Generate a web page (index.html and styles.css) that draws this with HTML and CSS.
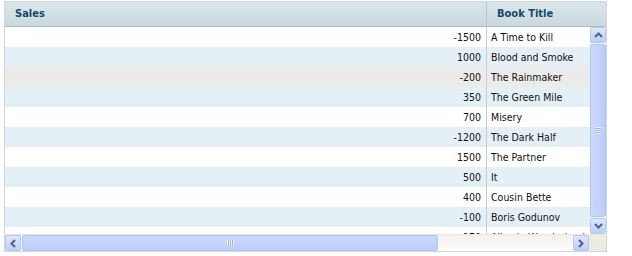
FILE: index.html
```html
<!DOCTYPE html>
<html>
<head>
<meta charset="utf-8">
<link rel="stylesheet" href="styles.css">
</head>
<body>
<div class="grid">
  <div class="head">
    <div class="hcell sales">Sales</div>
    <div class="hcell title">Book Title</div>
  </div>
  <div class="main">
    <div class="rows">
      <div class="row"><div class="c num">-1500</div><div class="c txt">A Time to Kill</div></div>
      <div class="row alt"><div class="c num">1000</div><div class="c txt">Blood and Smoke</div></div>
      <div class="row hover"><div class="c num">-200</div><div class="c txt">The Rainmaker</div></div>
      <div class="row alt"><div class="c num">350</div><div class="c txt">The Green Mile</div></div>
      <div class="row"><div class="c num">700</div><div class="c txt">Misery</div></div>
      <div class="row alt"><div class="c num">-1200</div><div class="c txt">The Dark Half</div></div>
      <div class="row"><div class="c num">1500</div><div class="c txt">The Partner</div></div>
      <div class="row alt"><div class="c num">500</div><div class="c txt">It</div></div>
      <div class="row"><div class="c num">400</div><div class="c txt">Cousin Bette</div></div>
      <div class="row alt"><div class="c num">-100</div><div class="c txt">Boris Godunov</div></div>
      <div class="row"><div class="c num">-170</div><div class="c txt">Alice in Wonderland</div></div>
    </div>
    <div class="vscroll">
      <div class="btn"><svg width="9" height="6" viewBox="0 0 9 6"><path d="M1 5 L4.5 1.5 L8 5" fill="none" stroke="#4d6185" stroke-width="2"/></svg></div>
      <div class="vthumb"><span class="grip-h"></span></div>
      <div class="btn"><svg width="9" height="6" viewBox="0 0 9 6"><path d="M1 1 L4.5 4.5 L8 1" fill="none" stroke="#4d6185" stroke-width="2"/></svg></div>
    </div>
  </div>
  <div class="hscroll">
    <div class="btn"><svg width="6" height="9" viewBox="0 0 6 9"><path d="M5 1 L1.5 4.5 L5 8" fill="none" stroke="#4d6185" stroke-width="2"/></svg></div>
    <div class="hthumb"><span class="grip-v"></span></div>
    <div class="htrack"></div>
    <div class="btn"><svg width="6" height="9" viewBox="0 0 6 9"><path d="M1 1 L4.5 4.5 L1 8" fill="none" stroke="#4d6185" stroke-width="2"/></svg></div>
    <div class="corner"></div>
  </div>
</div>
</body>
</html>
```
FILE: styles.css
```css
html, body {
  margin: 0;
  padding: 0;
  background: #fff;
}
body {
  padding: 1px 0 0 4px;
}
.grid {
  width: 601px;
  border: 1px solid #d0d7da;
  font-family: "DejaVu Sans Condensed", "DejaVu Sans", sans-serif;
  font-size: 10.5px;
  color: #111;
  background: #fff;
}
.head {
  display: flex;
  height: 24px;
  background: linear-gradient(#dbe6ea, #cad9de);
  border-bottom: 1px solid #a9bcc3;
}
.hcell {
  font-family: "DejaVu Sans Condensed", "DejaVu Sans", sans-serif;
  font-weight: bold;
  font-size: 11px;
  color: #15496b;
  line-height: 24px;
}
.sales {
  width: 471px;
  padding-left: 10px;
  border-right: 1px solid #b7c7cd;
}
.title {
  padding-left: 10px;
}
.main {
  display: flex;
  height: 207px;
  overflow: hidden;
}
.rows {
  width: 585px;
  overflow: hidden;
}
.row {
  display: flex;
  height: 20px;
  line-height: 20px;
  background: #fff;
}
.row.alt { background: #e4f0f5; }
.row.hover { background: #ebebeb; }
.c {
  white-space: nowrap;
  overflow: hidden;
}
.num {
  width: 476px;
  padding-right: 5px;
  text-align: right;
  border-right: 1px solid #c4cdd1;
}
.txt {
  padding-left: 4px;
  width: 99px;
}
.vscroll {
  width: 16px;
  display: flex;
  flex-direction: column;
  background: linear-gradient(90deg, #f3f1ec, #fdfdfa);
}
.btn {
  width: 14px;
  height: 14px;
  border: 1px solid #b7c8f3;
  border-radius: 2px;
  background: linear-gradient(#dde7fe, #bccefb);
  display: flex;
  align-items: center;
  justify-content: center;
  flex: none;
}
.vthumb {
  flex: 1;
  margin: 1px 0;
  border: 1px solid #b1c4f2;
  border-radius: 2px;
  background: linear-gradient(90deg, #cbd9fd, #bccdfa);
  display: flex;
  align-items: center;
  justify-content: center;
}
.grip-h {
  width: 6px;
  height: 7px;
  background: repeating-linear-gradient(#eef3ff 0 1px, #9fb2e4 1px 2px);
}
.hscroll {
  display: flex;
  height: 16px;
  background: linear-gradient(#f3f1ec, #fdfdfa);
  border-top: 1px solid #e8e6df;
}
.hthumb {
  width: 414px;
  margin: 0 1px;
  border: 1px solid #b1c4f2;
  border-radius: 2px;
  background: linear-gradient(#cbd9fd, #bccdfa);
  display: flex;
  align-items: center;
  justify-content: center;
}
.grip-v {
  width: 7px;
  height: 6px;
  background: repeating-linear-gradient(90deg, #eef3ff 0 1px, #9fb2e4 1px 2px);
}
.htrack {
  flex: 1;
}
.corner {
  width: 17px;
  background: #eeebe0;
}
```
